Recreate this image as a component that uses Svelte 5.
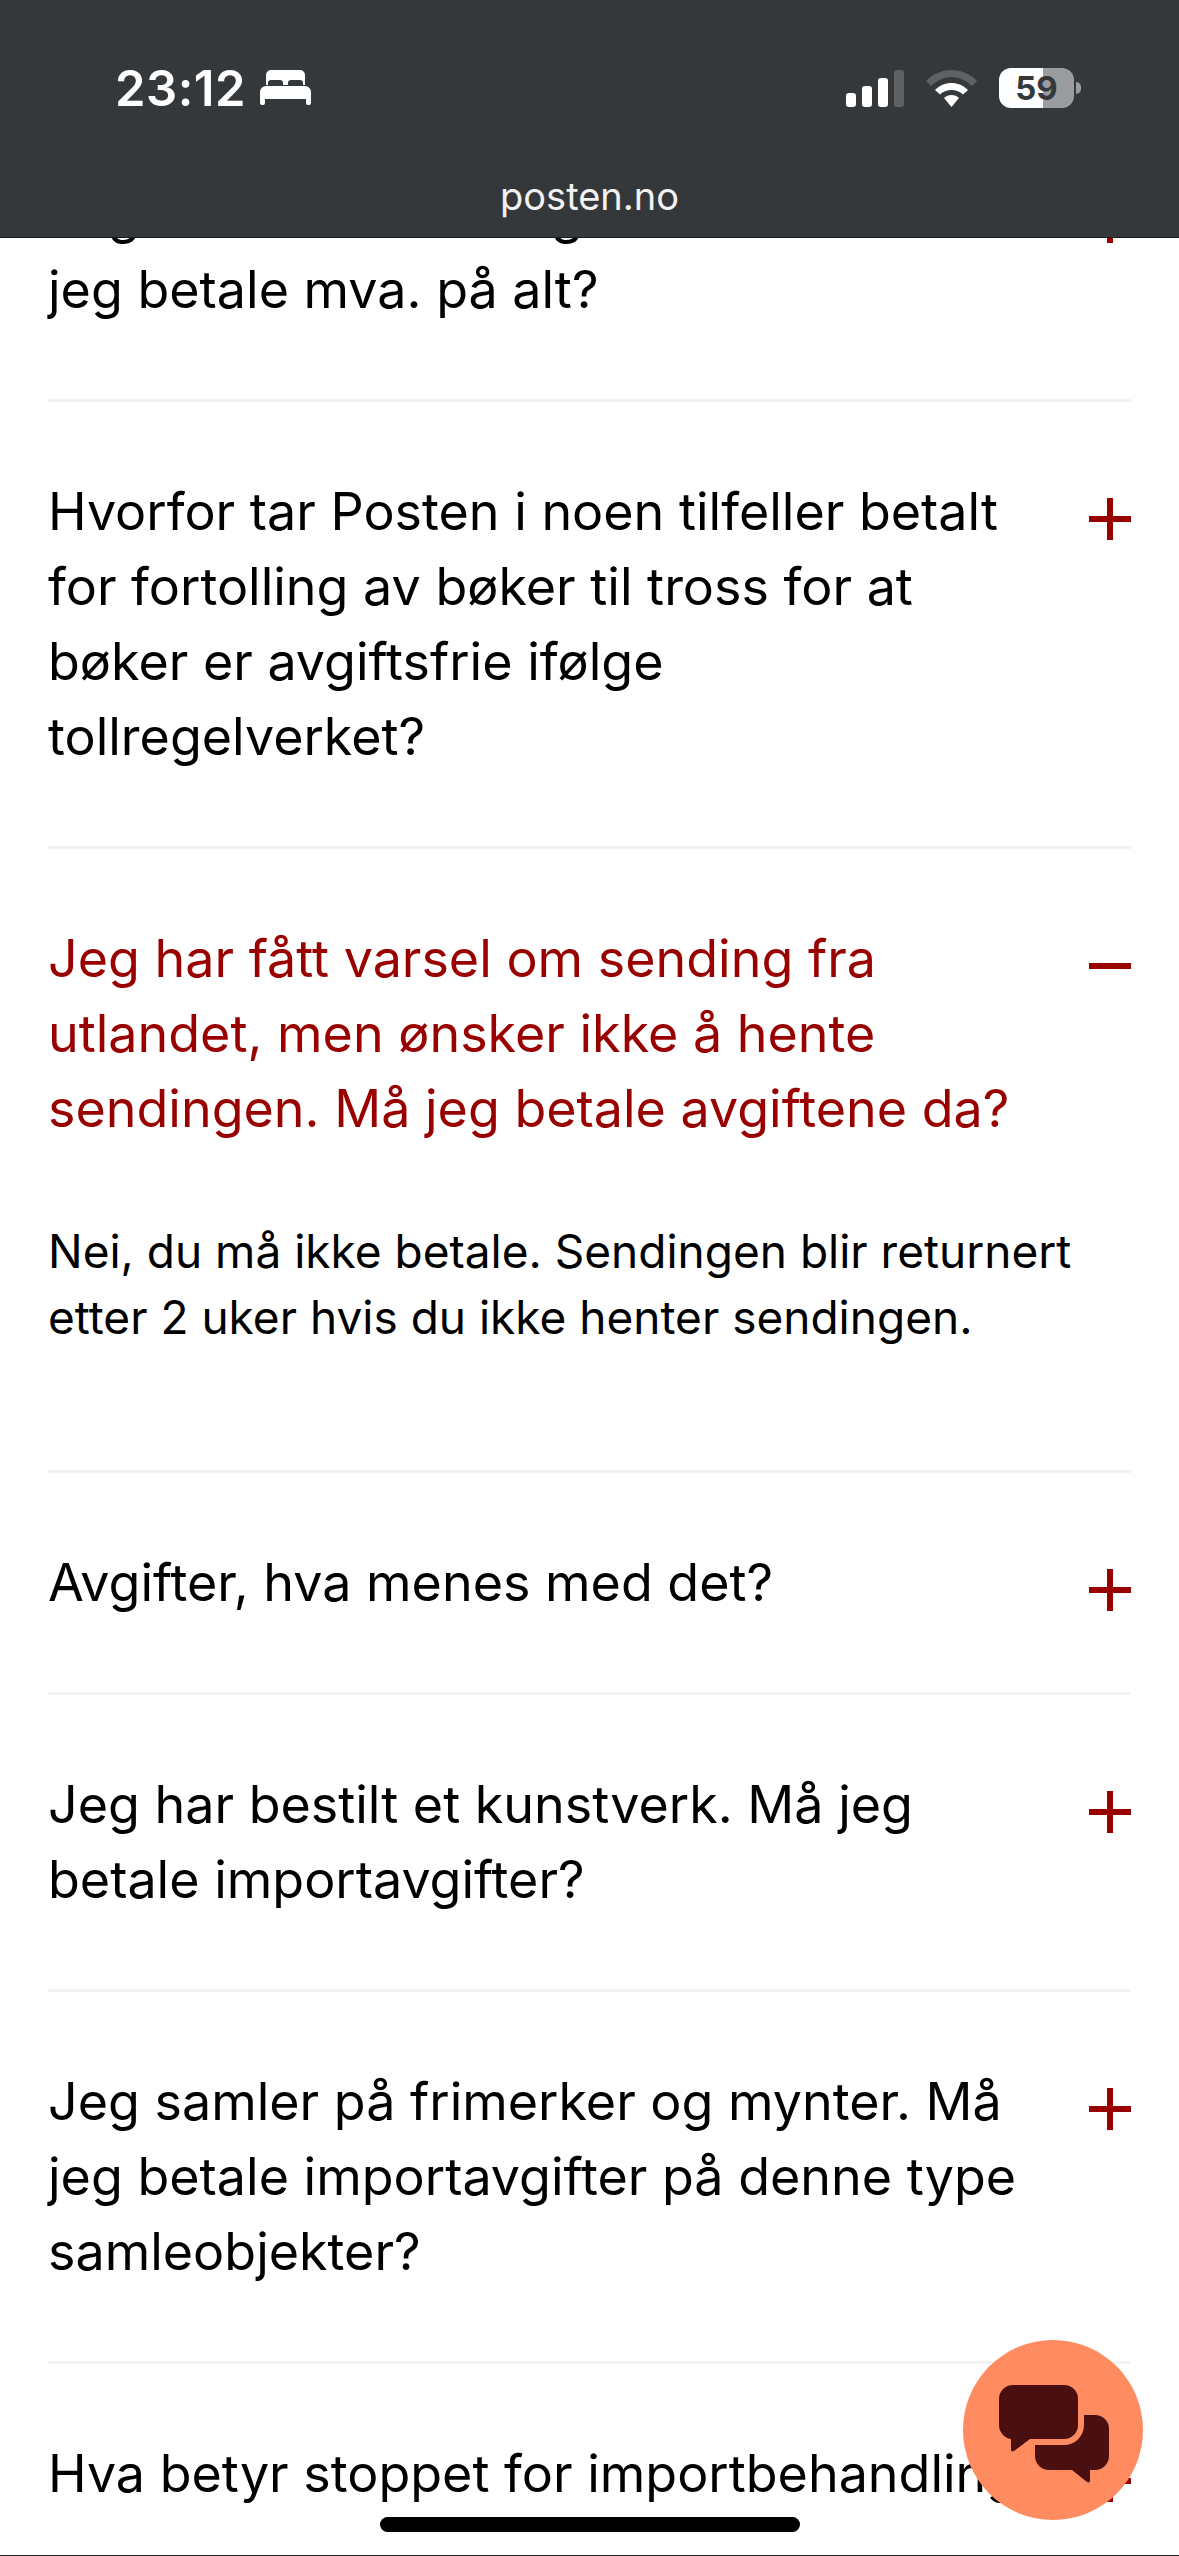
<script>
	const before = [
		{ q: 'Jeg har handlet mange flere varer. Må jeg betale mva. på alt?' },
		{ q: 'Hvorfor tar Posten i noen tilfeller betalt for fortolling av bøker til tross for at bøker er avgiftsfrie ifølge tollregelverket?' }
	];
	const after = [
		{ q: 'Avgifter, hva menes med det?' },
		{ q: 'Jeg har bestilt et kunstverk. Må jeg betale importavgifter?' },
		{ q: 'Jeg samler på frimerker og mynter. Må jeg betale importavgifter på denne type samleobjekter?' },
		{ q: 'Hva betyr stoppet for importbehandling?', oneLine: true }
	];
</script>

<div class="screen">
	<header class="top">
		<div class="status">
			<div class="time">
				<span>23:12</span>
				<svg width="51" height="35" viewBox="0 0 51 35">
					<path fill="#fff" d="M6 15V5a5 5 0 0 1 5-5h29a5 5 0 0 1 5 5v10h-2v-2a3 3 0 0 0-3-3h-9a3 3 0 0 0-3 3v2h-5v-2a3 3 0 0 0-3-3h-9a3 3 0 0 0-3 3v2z" />
					<path fill="#fff" d="M6 16h39a6 6 0 0 1 6 6v11a2 2 0 0 1-2 2h-1a2 2 0 0 1-2-2v-4H5v4a2 2 0 0 1-2 2H2a2 2 0 0 1-2-2V22a6 6 0 0 1 6-6z" />
				</svg>
			</div>
			<div class="icons">
				<svg width="58" height="37" viewBox="0 0 58 37">
					<rect x="0" y="23" width="10" height="14" rx="3" fill="#fff" />
					<rect x="16" y="16" width="10" height="21" rx="3" fill="#fff" />
					<rect x="32" y="8" width="10" height="29" rx="3" fill="#fff" />
					<rect x="48" y="0" width="10" height="37" rx="3" fill="#5f6163" />
				</svg>
				<svg width="51" height="37" viewBox="0 0 51 37">
					<path fill="#5f6163" d="M25.500 0c10 0 19 4 25.500 11l-5 5C40 10.500 33 7 25.500 7S11 10.500 5 16L0 11C6.500 4 15.500 0 25.500 0z" />
					<path fill="#fff" d="M25.500 13c6 0 12 2.500 16.500 7l-5 4.500c-3-3-7-4.500-11.500-4.500S17 21.500 14 24.500L9 20c4.500-4.500 10.500-7 16.500-7z" />
					<path fill="#fff" d="M25.500 25c3 0 5.500 1 7.500 3l-7.500 9-7.500-9c2-2 4.500-3 7.500-3z" />
				</svg>
				<div class="battery">
					<div class="cell"><span class="level">59</span></div>
					<div class="nub"></div>
				</div>
			</div>
		</div>
		<div class="url">posten.no</div>
	</header>

	<main class="content">
		<div class="list">
			{#each before as item}
				<div class="item">
					<h3>{item.q}</h3>
					<span class="plus"></span>
				</div>
			{/each}
			<div class="item open">
				<h3>Jeg har fått varsel om sending fra utlandet, men ønsker ikke å hente sendingen. Må jeg betale avgiftene da?</h3>
				<span class="minus"></span>
				<p>Nei, du må ikke betale. Sendingen blir returnert etter 2 uker hvis du ikke henter sendingen.</p>
			</div>
			{#each after as item}
				<div class="item">
					<h3 class:one-line={item.oneLine}>{item.q}</h3>
					<span class="plus"></span>
				</div>
			{/each}
		</div>
	</main>

	<button class="chat" aria-label="Chat">
		<svg width="110" height="98" viewBox="0 0 110 98">
			<path fill="#4a0f10" d="M14 0h51a14 14 0 0 1 14 14v26a14 14 0 0 1-14 14H31L15 66c-1.500 1-3 .5-3-1.500V54A14 14 0 0 1 0 40V14A14 14 0 0 1 14 0z" />
			<path fill="#4a0f10" d="M85 30h11a14 14 0 0 1 14 14v27a14 14 0 0 1-14 14h-5v10.500c0 2-1.500 2.500-3 1.500L73 85H50a14 14 0 0 1-14-14V60h29a20 20 0 0 0 20-20z" />
		</svg>
	</button>
	<div class="home"></div>
</div>

<style>
	:global(body) {
		margin: 0;
		background: #fff;
	}

	.screen {
		position: relative;
		display: flex;
		flex-direction: column;
		box-sizing: border-box;
		width: 1179px;
		height: 2556px;
		overflow: hidden;
		background: #fff;
		border-bottom: 1px solid #222;
		font-family: Inter, 'Liberation Sans', sans-serif;
		color: #000;
	}

	.top {
		flex: none;
		box-sizing: border-box;
		height: 238px;
		background: #35383b;
		border-bottom: 1px solid #1c1c1c;
		color: #fff;
	}

	.status {
		display: flex;
		justify-content: space-between;
		align-items: center;
		height: 56px;
		padding: 60px 98px 0 115px;
	}

	.time {
		display: flex;
		align-items: center;
		gap: 14px;
		font-size: 49px;
		font-weight: 600;
		letter-spacing: 0.5px;
	}

	.time svg {
		margin-top: -1px;
	}

	.icons {
		display: flex;
		align-items: center;
		gap: 22px;
	}

	.battery {
		display: flex;
		align-items: center;
		gap: 2px;
	}

	.cell {
		display: flex;
		align-items: center;
		justify-content: center;
		width: 75px;
		height: 40px;
		border-radius: 12px;
		background: linear-gradient(to right, #fff 59%, #9b9c9d 59%);
	}

	.level {
		font-size: 33px;
		font-weight: 700;
		color: #35383b;
	}

	.nub {
		width: 5px;
		height: 12px;
		border-radius: 0 5px 5px 0;
		background: #9b9c9d;
	}

	.url {
		margin-top: 57px;
		text-align: center;
		font-size: 38px;
		line-height: 46px;
		color: #f2f2f2;
	}

	.content {
		flex: 1;
		min-height: 0;
		overflow: hidden;
	}

	.list {
		margin-top: -133px;
		padding: 0 48px;
	}

	.item {
		position: relative;
		padding: 72px 0;
		border-bottom: 3px solid #f2f2f2;
	}

	h3 {
		width: 985px;
		margin: 0;
		font-size: 52px;
		font-weight: 400;
		line-height: 75px;
	}

	.one-line {
		white-space: nowrap;
	}

	p {
		width: 1050px;
		margin: 72px 0 0;
		padding-bottom: 48px;
		font-size: 46px;
		line-height: 66px;
	}

	.open h3 {
		color: #990000;
	}

	.plus,
	.minus {
		position: absolute;
		right: 0;
		top: 96px;
		width: 42px;
		height: 42px;
	}

	.plus::before,
	.minus::before {
		content: '';
		position: absolute;
		left: 0;
		right: 0;
		top: 18px;
		height: 6px;
		background: #990000;
	}

	.plus::after {
		content: '';
		position: absolute;
		top: 0;
		bottom: 0;
		left: 18px;
		width: 6px;
		background: #990000;
	}

	.chat {
		position: absolute;
		left: 963px;
		top: 2340px;
		display: flex;
		align-items: flex-start;
		box-sizing: border-box;
		width: 180px;
		height: 180px;
		padding: 45px 0 0 36px;
		border: none;
		border-radius: 50%;
		background: #ff8b60;
	}

	.chat svg {
		display: block;
	}

	.home {
		position: absolute;
		left: 380px;
		top: 2517px;
		width: 420px;
		height: 15px;
		border-radius: 8px;
		background: #000;
	}
</style>
